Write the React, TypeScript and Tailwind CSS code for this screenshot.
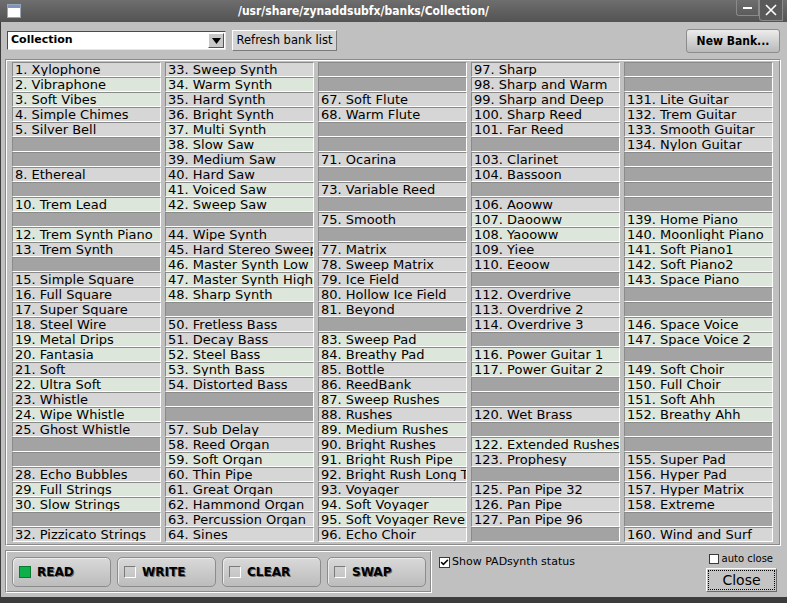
import { Check } from "lucide-react";

const names: string[] = [
  // 1-32
  "Xylophone", "Vibraphone", "Soft Vibes", "Simple Chimes", "Silver Bell", "", "", "Ethereal",
  "", "Trem Lead", "", "Trem Synth Piano", "Trem Synth", "", "Simple Square", "Full Square",
  "Super Square", "Steel Wire", "Metal Drips", "Fantasia", "Soft", "Ultra Soft", "Whistle", "Wipe Whistle",
  "Ghost Whistle", "", "", "Echo Bubbles", "Full Strings", "Slow Strings", "", "Pizzicato Strings",
  // 33-64
  "Sweep Synth", "Warm Synth", "Hard Synth", "Bright Synth", "Multi Synth", "Slow Saw", "Medium Saw", "Hard Saw",
  "Voiced Saw", "Sweep Saw", "", "Wipe Synth", "Hard Stereo Sweep", "Master Synth Low", "Master Synth High", "Sharp Synth",
  "", "Fretless Bass", "Decay Bass", "Steel Bass", "Synth Bass", "Distorted Bass", "", "",
  "Sub Delay", "Reed Organ", "Soft Organ", "Thin Pipe", "Great Organ", "Hammond Organ", "Percussion Organ", "Sines",
  // 65-96
  "", "", "Soft Flute", "Warm Flute", "", "", "Ocarina", "",
  "Variable Reed", "", "Smooth", "", "Matrix", "Sweep Matrix", "Ice Field", "Hollow Ice Field",
  "Beyond", "", "Sweep Pad", "Breathy Pad", "Bottle", "ReedBank", "Sweep Rushes", "Rushes",
  "Medium Rushes", "Bright Rushes", "Bright Rush Pipe", "Bright Rush Long Tail", "Voyager", "Soft Voyager", "Soft Voyager Reverb", "Echo Choir",
  // 97-128
  "Sharp", "Sharp and Warm", "Sharp and Deep", "Sharp Reed", "Far Reed", "", "Clarinet", "Bassoon",
  "", "Aooww", "Daooww", "Yaooww", "Yiee", "Eeoow", "", "Overdrive",
  "Overdrive 2", "Overdrive 3", "", "Power Guitar 1", "Power Guitar 2", "", "", "Wet Brass",
  "", "Extended Rushes", "Prophesy", "", "Pan Pipe 32", "Pan Pipe", "Pan Pipe 96", "",
  // 129-160
  "", "", "Lite Guitar", "Trem Guitar", "Smooth Guitar", "Nylon Guitar", "", "",
  "", "", "Home Piano", "Moonlight Piano", "Soft Piano1", "Soft Piano2", "Space Piano", "",
  "", "Space Voice", "Space Voice 2", "", "Soft Choir", "Full Choir", "Soft Ahh", "Breathy Ahh",
  "", "", "Super Pad", "Hyper Pad", "Hyper Matrix", "Extreme", "", "Wind and Surf",
];

// slots that hold PADsynth patches
const padSlots = new Set([
  2, 3, 10, 12, 19, 20, 22, 24, 29, 30,
  34, 37, 38, 41, 42, 46, 47, 48, 52, 53, 59,
  83, 84, 87, 89, 91, 94, 95,
  107, 108, 116, 117, 122,
  139, 140, 141, 142, 143, 146, 147, 149, 150, 151, 152,
]);

function Slot({ n }: { n: number }) {
  const name = names[n - 1];
  const bg = !name ? "bg-[#a3a3a3]" : padSlots.has(n) ? "bg-[#dce6da]" : "bg-[#d6d6d6]";
  return (
    <div
      className={`h-[15px] border-t border-l border-t-[#8a8a8a] border-l-[#8a8a8a] border-b border-r border-b-white border-r-white ${bg} pl-[2px] overflow-hidden whitespace-nowrap text-[13px] leading-[13px] text-black`}
    >
      {name ? `${n}. ${name}` : ""}
    </div>
  );
}

function ModeButton({ label, active }: { label: string; active?: boolean }) {
  return (
    <div className="w-[99px] h-[30px] rounded-[5px] border border-[#8c8c8c] bg-gradient-to-b from-[#d9d9d9] to-[#bcbcbc] shadow-[inset_1px_1px_0_#ececec] flex items-center pl-[6px]">
      {active ? (
        <div className="w-[12px] h-[12px] bg-[#0fb04a] border border-[#0a7a33]" />
      ) : (
        <div className="w-[12px] h-[12px] border border-t-[#7a7a7a] border-l-[#7a7a7a] border-b-white border-r-white" />
      )}
      <span className="ml-[6px] text-[12px] font-bold text-black [text-shadow:1px_1px_0_#6b6b6b]">
        {label}
      </span>
    </div>
  );
}

export default function App() {
  const cols = [0, 1, 2, 3, 4];
  return (
    <div className="w-[787px] h-[603px] bg-[#3c3c3c] flex flex-col font-['DejaVu_Sans',sans-serif] overflow-hidden">
      {/* Title bar */}
      <div className="h-[22px] bg-gradient-to-b from-[#6e6e6e] to-[#535353] flex items-center relative">
        <div className="ml-[7px] w-[14px] h-[14px] bg-white border border-[#9aa6b8] flex flex-col">
          <div className="h-[3px] bg-[#7d93c4]" />
        </div>
        <div className="flex-1 text-center text-white font-bold text-[12px] [font-stretch:condensed] font-['DejaVu_Sans_Condensed','DejaVu_Sans',sans-serif] pr-[30px]">
          /usr/share/zynaddsubfx/banks/Collection/
        </div>
        <div className="flex items-start self-start mr-[4px]">
          <div className="w-[23px] h-[16px] border border-t-0 border-[#8a8a8a] rounded-bl-[3px] flex items-center justify-center">
            <div className="w-[9px] h-[2px] bg-white" />
          </div>
          <div className="w-[24px] h-[21px] border border-t-0 border-[#8a8a8a] rounded-bl-[3px] bg-[#5a5a5a] flex items-center justify-center">
            <svg width="12" height="12" viewBox="0 0 12 12">
              <path d="M1 1 L11 11 M11 1 L1 11" stroke="white" strokeWidth="1.6" />
            </svg>
          </div>
        </div>
      </div>

      {/* Window body */}
      <div className="flex-1 bg-[#c0c0c0] ml-[1px] mb-[6px] flex flex-col">
        {/* Top controls */}
        <div className="h-[37px] flex items-center">
          <div className="ml-[6px] w-[219px] h-[19px] bg-white border border-t-[#4a4a4a] border-l-[#4a4a4a] border-b-[#e6e6e6] border-r-[#e6e6e6] flex items-center">
            <span className="pl-[3px] text-[11px] font-bold text-black flex-1">Collection</span>
            <div className="w-[16px] h-[15px] mr-[1px] bg-[#c8c8c8] border border-t-white border-l-white border-b-[#555] border-r-[#555] flex items-center justify-center">
              <svg width="9" height="6" viewBox="0 0 9 6">
                <path d="M0 0 H9 L4.5 6 Z" fill="black" />
              </svg>
            </div>
          </div>
          <div className="ml-[6px] w-[105px] h-[21px] bg-[#d4d4d4] border border-t-white border-l-white border-b-[#7a7a7a] border-r-[#7a7a7a] flex items-center justify-center text-[11.5px] text-black">
            Refresh bank list
          </div>
          <div className="ml-auto mr-[7px] w-[94px] h-[24px] rounded-[3px] border border-[#8c8c8c] bg-gradient-to-b from-[#ececec] to-[#b9b9b9] flex items-center justify-center text-[12px] font-bold text-black [font-stretch:condensed] font-['DejaVu_Sans_Condensed','DejaVu_Sans',sans-serif]">
            New Bank...
          </div>
        </div>

        {/* Bank slots */}
        <div className="ml-[4px] w-[776px] h-[487px] border border-t-[#8a8a8a] border-l-[#8a8a8a] border-b-white border-r-white">
          <div className="h-full border border-t-white border-l-white border-b-[#8a8a8a] border-r-[#8a8a8a] pl-[5px] pt-[1px]">
            <div className="grid grid-cols-[repeat(5,149px)] gap-x-[4px]">
              {cols.map((c) => (
                <div key={c} className="flex flex-col">
                  {Array.from({ length: 32 }, (_, i) => (
                    <Slot key={i} n={c * 32 + i + 1} />
                  ))}
                </div>
              ))}
            </div>
          </div>
        </div>

        {/* Bottom controls */}
        <div className="flex-1 flex items-start">
          <div className="ml-[4px] mt-[4px] w-[427px] h-[43px] border border-t-[#8a8a8a] border-l-[#8a8a8a] border-b-white border-r-white">
            <div className="h-full border border-t-white border-l-white border-b-[#8a8a8a] border-r-[#8a8a8a] flex items-start gap-[6px] pl-[5px] pt-[5px]">
              <ModeButton label="READ" active />
              <ModeButton label="WRITE" />
              <ModeButton label="CLEAR" />
              <ModeButton label="SWAP" />
            </div>
          </div>

          <div className="ml-[7px] mt-[10px] flex items-center">
            <div className="w-[11px] h-[11px] bg-white border border-[#3a3a3a] flex items-center justify-center">
              <Check className="w-[9px] h-[9px] text-black" strokeWidth={4} />
            </div>
            <span className="ml-[2px] text-[11px] leading-[12px] text-black">Show PADsynth status</span>
          </div>

          <div className="ml-auto mr-[10px] mt-[7px] flex flex-col items-end">
            <div className="flex items-center mr-[4px]">
              <div className="w-[10px] h-[10px] bg-white border border-[#3a3a3a]" />
              <span className="ml-[3px] text-[10px] leading-[11px] text-black">auto close</span>
            </div>
            <div className="mt-[4px] w-[71px] h-[24px] border border-t-white border-l-white border-b-[#6a6a6a] border-r-[#6a6a6a] bg-[#c4c4c4] p-[1px]">
              <div className="h-full border border-dotted border-black flex items-center justify-center text-[14px] text-black">
                Close
              </div>
            </div>
          </div>
        </div>
      </div>
    </div>
  );
}
